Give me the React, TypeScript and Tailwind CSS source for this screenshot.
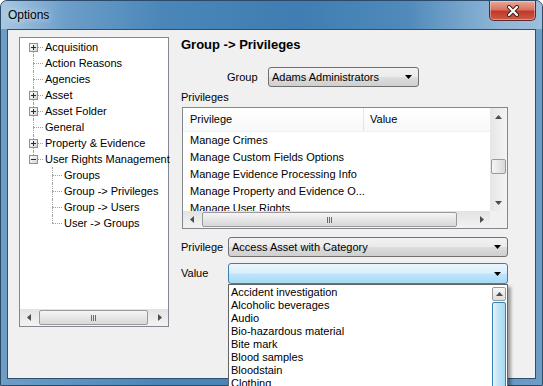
import React from 'react';

type TreeNode = {
  label: string;
  level: 0 | 1;
  box?: '+' | '-';
  pos: 'first' | 'mid' | 'last';
};

const treeNodes: TreeNode[] = [
  { label: 'Acquisition', level: 0, box: '+', pos: 'first' },
  { label: 'Action Reasons', level: 0, pos: 'mid' },
  { label: 'Agencies', level: 0, pos: 'mid' },
  { label: 'Asset', level: 0, box: '+', pos: 'mid' },
  { label: 'Asset Folder', level: 0, box: '+', pos: 'mid' },
  { label: 'General', level: 0, pos: 'mid' },
  { label: 'Property & Evidence', level: 0, box: '+', pos: 'mid' },
  { label: 'User Rights Management', level: 0, box: '-', pos: 'last' },
  { label: 'Groups', level: 1, pos: 'mid' },
  { label: 'Group -> Privileges', level: 1, pos: 'mid' },
  { label: 'Group -> Users', level: 1, pos: 'mid' },
  { label: 'User -> Groups', level: 1, pos: 'last' },
];

const privileges = [
  'Manage Crimes',
  'Manage Custom Fields Options',
  'Manage Evidence Processing Info',
  'Manage Property and Evidence O...',
  'Manage User Rights',
];

const values = [
  'Accident investigation',
  'Alcoholic beverages',
  'Audio',
  'Bio-hazardous material',
  'Bite mark',
  'Blood samples',
  'Bloodstain',
  'Clothing',
];

function Arrow({ dir, color = '#4d4d4d' }: { dir: 'up' | 'down' | 'left' | 'right'; color?: string }) {
  const pts = {
    up: '0,4 7,4 3.5,0',
    down: '0,0 7,0 3.5,4',
    left: '4,0 4,7 0,3.5',
    right: '0,0 0,7 4,3.5',
  }[dir];
  const w = dir === 'up' || dir === 'down' ? 7 : 4;
  const h = dir === 'up' || dir === 'down' ? 4 : 7;
  return (
    <svg width={w} height={h} viewBox={`0 0 ${w} ${h}`}>
      <polygon points={pts} fill={color} />
    </svg>
  );
}

function Grip({ vertical }: { vertical?: boolean }) {
  return (
    <div className={vertical ? 'flex flex-col gap-[1px]' : 'flex gap-[1px]'}>
      {[0, 1, 2].map((i) => (
        <div key={i} className={vertical ? 'w-[6px] h-[1px] bg-[#6b6b6b]' : 'w-[1px] h-[6px] bg-[#6b6b6b]'} />
      ))}
    </div>
  );
}

function HScroll({ thumbLeft, thumbWidth }: { thumbLeft: number; thumbWidth: number }) {
  return (
    <div className="h-[17px] flex items-center bg-[#eaeaea] bg-gradient-to-b from-[#e3e3e3] to-[#f3f3f3]">
      <div className="w-[17px] h-full flex items-center justify-center shrink-0">
        <Arrow dir="left" />
      </div>
      <div className="flex-1 h-full flex items-center">
        <div
          className="h-[15px] rounded-[2px] border border-[#9a9a9a] bg-gradient-to-b from-[#f5f5f5] to-[#d8d8d8] flex items-center justify-center"
          style={{ marginLeft: thumbLeft, width: thumbWidth }}
        >
          <Grip />
        </div>
      </div>
      <div className="w-[17px] h-full flex items-center justify-center shrink-0">
        <Arrow dir="right" />
      </div>
    </div>
  );
}

function PlusBox({ minus }: { minus?: boolean }) {
  return (
    <div className="absolute left-[9px] top-[4px] w-[9px] h-[9px] border border-[#919191] bg-gradient-to-br from-white to-[#d6d6d6] flex items-center justify-center">
      <div className="relative w-[5px] h-[5px]">
        <div className="absolute left-0 top-[2px] w-[5px] h-[1px] bg-[#2b2b2b]" />
        {!minus && <div className="absolute left-[2px] top-0 w-[1px] h-[5px] bg-[#2b2b2b]" />}
      </div>
    </div>
  );
}

function TreeRow({ node }: { node: TreeNode }) {
  const vClass =
    node.pos === 'first'
      ? 'top-[8px] bottom-0'
      : node.pos === 'last'
        ? 'top-0 h-[8px]'
        : 'top-0 bottom-0';
  if (node.level === 0) {
    return (
      <div className="h-[16px] flex items-center">
        <div className="relative w-[25px] h-full shrink-0">
          <div className={`absolute left-[13px] w-0 border-l border-dotted border-[#a0a0a0] ${vClass}`} />
          <div className="absolute left-[13px] top-[8px] w-[10px] h-0 border-t border-dotted border-[#a0a0a0]" />
          {node.box && <PlusBox minus={node.box === '-'} />}
        </div>
        <span className="whitespace-nowrap">{node.label}</span>
      </div>
    );
  }
  return (
    <div className="h-[16px] flex items-center">
      <div className="relative w-[44px] h-full shrink-0">
        <div className={`absolute left-[32px] w-0 border-l border-dotted border-[#a0a0a0] ${vClass}`} />
        <div className="absolute left-[32px] top-[8px] w-[10px] h-0 border-t border-dotted border-[#a0a0a0]" />
      </div>
      <span className="whitespace-nowrap">{node.label}</span>
    </div>
  );
}

function Combo({ text, width, focused }: { text: string; width: number; focused?: boolean }) {
  return (
    <div
      className={
        focused
          ? 'h-full flex items-center rounded-[3px] border border-[#3c7fb1] bg-[linear-gradient(#eaf6fd_0%,#d9f0fc_48%,#bee6fd_52%,#a7d9f5_100%)] pl-[3px] pr-[6px]'
          : 'h-full flex items-center rounded-[3px] border border-[#707070] bg-[linear-gradient(#f2f2f2_0%,#ebebeb_48%,#dddddd_52%,#cfcfcf_100%)] pl-[3px] pr-[6px]'
      }
      style={{ width }}
    >
      <span className="flex-1 whitespace-nowrap">{text}</span>
      <Arrow dir="down" color="#000" />
    </div>
  );
}

function CloseButton() {
  return (
    <div className="w-[47px] h-[20px] rounded-b-[5px] border border-t-0 border-[#5a2a2a] bg-[linear-gradient(#e9a99b_0%,#d7745f_45%,#c2392b_55%,#cf5a45_100%)] flex items-center justify-center shadow-[inset_0_0_0_1px_rgba(255,255,255,0.35)]">
      <svg width="14" height="12" viewBox="0 0 14 12">
        <path d="M3 2 L11 10 M11 2 L3 10" stroke="#3a1a1a" strokeWidth="4" strokeLinecap="round" />
        <path d="M3 2 L11 10 M11 2 L3 10" stroke="#fff" strokeWidth="2.2" strokeLinecap="round" />
      </svg>
    </div>
  );
}

export default function App() {
  return (
    <div className="w-[543px] h-[386px] bg-white overflow-hidden font-['Liberation_Sans',Arial,sans-serif] text-[11px] text-black">
      <div className="w-full h-full flex flex-col rounded-t-[7px] border border-[#2c4a69] bg-[linear-gradient(90deg,#6e9dc7_0%,#4a85b8_30%,#4a85b8_70%,#6e9dc7_100%)]">
        {/* Title bar */}
        <div className="h-[28px] flex items-start shrink-0 rounded-t-[6px] bg-[linear-gradient(90deg,#a9c8e2_0%,#6c9ec9_12%,#4a86b8_30%,#3f7db2_55%,#4f8aba_75%,#8fb5d6_92%,#9dbfdc_100%)]">
          <div className="pl-[7px] pt-[7px] text-[12px] leading-[15px] [text-shadow:0_0_6px_rgba(255,255,255,0.9)]">Options</div>
          <div className="flex-1" />
          <div className="mr-[6px]">
            <CloseButton />
          </div>
        </div>

        {/* Client area */}
        <div className="flex-1 mx-[6px] mb-[6px] border border-[#2f4f70] bg-[#f0f0f0] flex relative">
          {/* Tree */}
          <div className="ml-[11px] mt-[7px] w-[150px] h-[290px] border border-[#828790] bg-white flex flex-col shrink-0">
            <div className="flex-1 pt-[1px]">
              {treeNodes.map((n) => (
                <TreeRow key={n.label} node={n} />
              ))}
            </div>
            <HScroll thumbLeft={2} thumbWidth={109} />
          </div>

          {/* Right panel */}
          <div className="ml-[12px] flex flex-col">
            <div className="mt-[7px] h-[16px] leading-[16px] text-[13px] font-bold">Group -&gt; Privileges</div>

            <div className="mt-[14px] h-[20px] flex items-center">
              <span className="ml-[46px] w-[41px]">Group</span>
              <Combo text="Adams Administrators" width={151} />
            </div>

            <div className="mt-[3px] h-[14px] leading-[14px]">Privileges</div>

            {/* List view */}
            <div className="mt-[3px] ml-[1px] w-[326px] h-[122px] border border-[#828790] bg-white flex flex-col">
              <div className="flex flex-1 min-h-0">
                <div className="flex-1 flex flex-col overflow-hidden">
                  <div className="h-[24px] shrink-0 flex items-center bg-gradient-to-b from-white to-[#f7f8fa] border-b border-[#f0f0f0]">
                    <div className="w-[181px] h-full flex items-center pl-[7px] border-r border-[#e5e5e5]">Privilege</div>
                    <div className="pl-[6px]">Value</div>
                  </div>
                  {privileges.map((p) => (
                    <div key={p} className="h-[17px] flex items-center pl-[7px] whitespace-nowrap shrink-0">
                      {p}
                    </div>
                  ))}
                </div>
                <div className="w-[17px] flex flex-col items-center bg-gradient-to-r from-[#e6e6e6] to-[#f3f3f3]">
                  <div className="h-[17px] flex items-center justify-center">
                    <Arrow dir="up" />
                  </div>
                  <div className="flex-1 w-full relative">
                    <div className="mt-[34px] mx-[1px] h-[15px] rounded-[2px] border border-[#9a9a9a] bg-gradient-to-r from-[#f5f5f5] to-[#d8d8d8]" />
                  </div>
                  <div className="h-[17px] flex items-center justify-center">
                    <Arrow dir="down" />
                  </div>
                </div>
              </div>
              <div className="flex">
                <div className="flex-1">
                  <HScroll thumbLeft={2} thumbWidth={255} />
                </div>
                <div className="w-[17px] h-[17px] bg-[#f0f0f0]" />
              </div>
            </div>

            <div className="mt-[8px] h-[20px] flex items-center">
              <span className="w-[47px]">Privilege</span>
              <Combo text="Access Asset with Category" width={280} />
            </div>

            <div className="mt-[6px] h-[21px] flex items-center relative">
              <span className="w-[47px]">Value</span>
              <Combo text="" width={280} focused />
              {/* Open drop-down list */}
              <div className="absolute left-[47px] top-[21px] w-[280px] h-[110px] border border-[#646464] bg-white flex shadow-[3px_3px_3px_rgba(0,0,0,0.35)] z-10">
                <div className="flex-1 pl-[2px] pt-[1px]">
                  {values.map((v) => (
                    <div key={v} className="h-[13px] leading-[13px] whitespace-nowrap">
                      {v}
                    </div>
                  ))}
                </div>
                <div className="w-[15px] flex flex-col pt-[2px] pr-[1px]">
                  <div className="h-[14px] rounded-[2px] border border-[#9a9a9a] bg-gradient-to-b from-[#f8f8f8] to-[#dcdcdc] flex items-center justify-center">
                    <Arrow dir="up" />
                  </div>
                  <div className="flex-1 mt-[1px] rounded-[2px] border border-[#3c7fb1] bg-[linear-gradient(90deg,#e3f4fc_0%,#c4e6f8_40%,#a9d9f4_100%)]" />
                </div>
              </div>
            </div>
          </div>
        </div>
      </div>
    </div>
  );
}
